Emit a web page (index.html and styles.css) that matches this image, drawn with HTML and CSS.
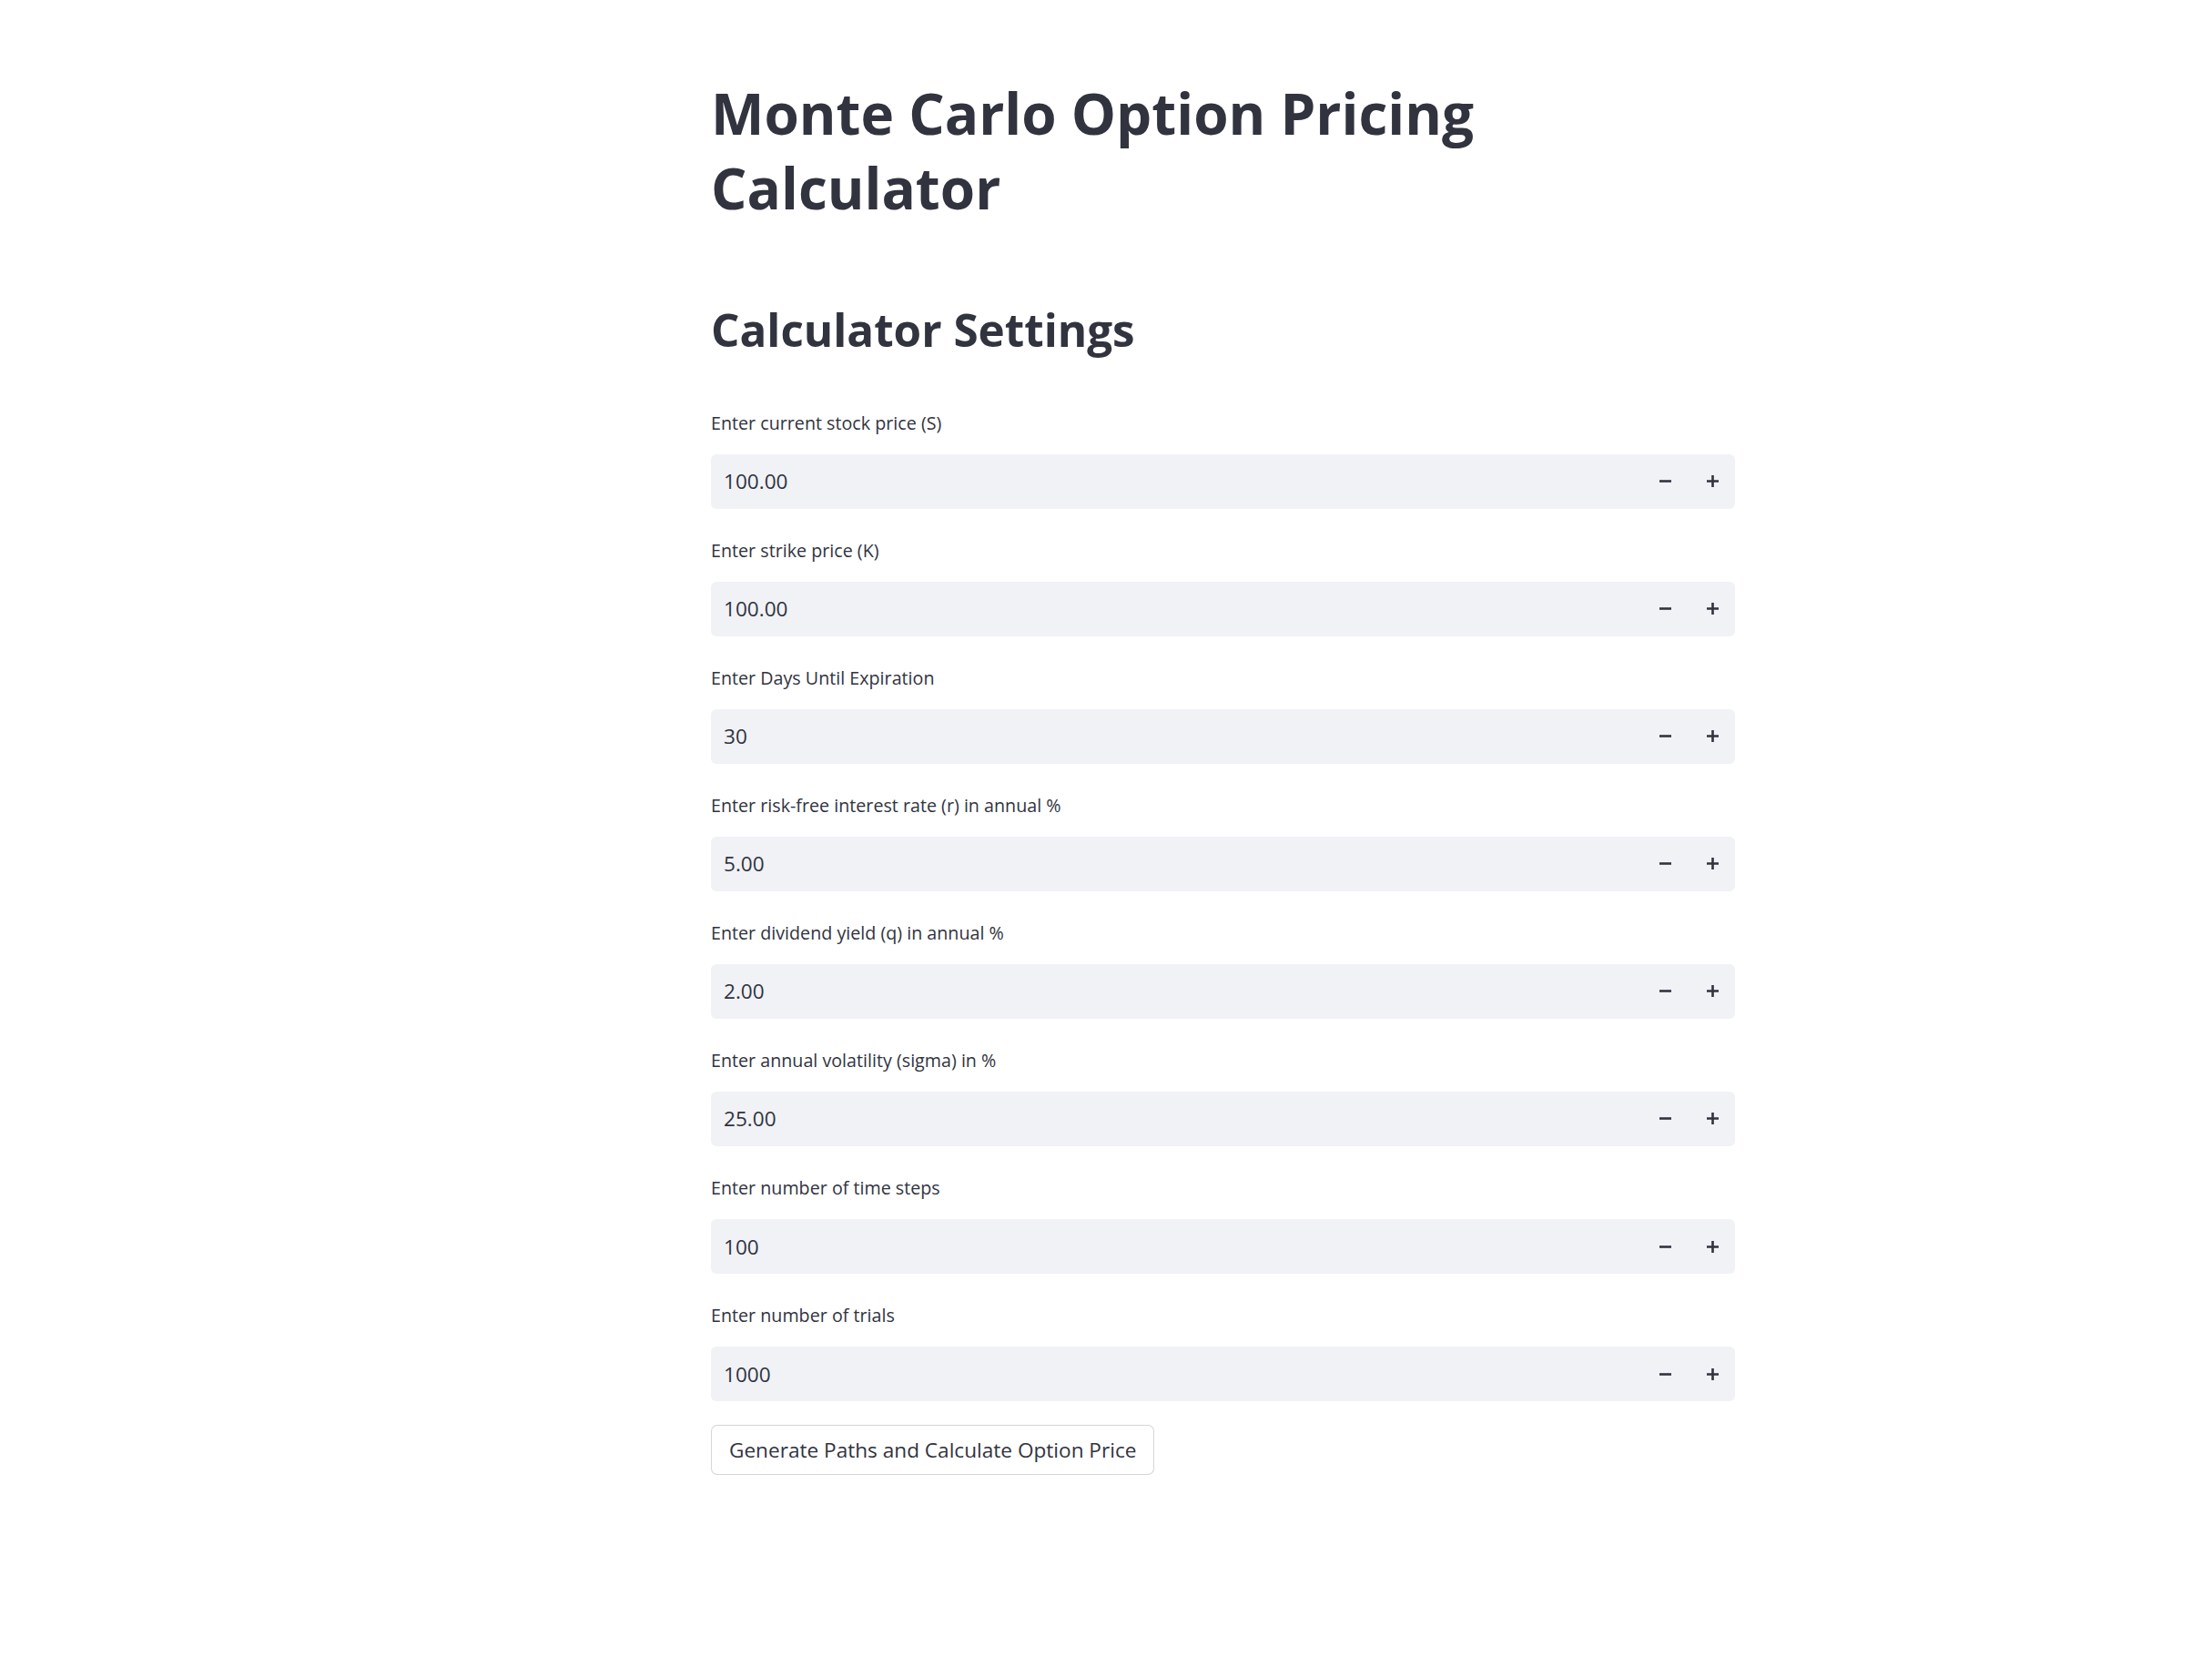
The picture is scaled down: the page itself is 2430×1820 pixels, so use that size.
FILE: index.html
```html
<!DOCTYPE html>
<html lang="en">
<head>
<meta charset="utf-8">
<title>Monte Carlo Option Pricing Calculator</title>
<link rel="stylesheet" href="styles.css">
</head>
<body>
<main class="app">
  <div class="block">
    <h1 class="title">Monte Carlo Option Pricing Calculator</h1>
    <h2 class="subtitle">Calculator Settings</h2>
    <div class="fields">
      <div class="field">
        <label class="field-label">Enter current stock price (S)</label>
        <div class="num-input">
          <input class="num-value" type="text" value="100.00">
          <button class="step dec"><svg viewBox="0 0 13 13" width="13" height="13"><path d="M0 6.5H13" stroke="currentColor" stroke-width="2.6"/></svg></button>
          <button class="step inc"><svg viewBox="0 0 13 13" width="13" height="13"><path d="M0 6.5H13M6.5 0V13" stroke="currentColor" stroke-width="2.6"/></svg></button>
        </div>
      </div>
      <div class="field">
        <label class="field-label">Enter strike price (K)</label>
        <div class="num-input">
          <input class="num-value" type="text" value="100.00">
          <button class="step dec"><svg viewBox="0 0 13 13" width="13" height="13"><path d="M0 6.5H13" stroke="currentColor" stroke-width="2.6"/></svg></button>
          <button class="step inc"><svg viewBox="0 0 13 13" width="13" height="13"><path d="M0 6.5H13M6.5 0V13" stroke="currentColor" stroke-width="2.6"/></svg></button>
        </div>
      </div>
      <div class="field">
        <label class="field-label">Enter Days Until Expiration</label>
        <div class="num-input">
          <input class="num-value" type="text" value="30">
          <button class="step dec"><svg viewBox="0 0 13 13" width="13" height="13"><path d="M0 6.5H13" stroke="currentColor" stroke-width="2.6"/></svg></button>
          <button class="step inc"><svg viewBox="0 0 13 13" width="13" height="13"><path d="M0 6.5H13M6.5 0V13" stroke="currentColor" stroke-width="2.6"/></svg></button>
        </div>
      </div>
      <div class="field">
        <label class="field-label">Enter risk-free interest rate (r) in annual %</label>
        <div class="num-input">
          <input class="num-value" type="text" value="5.00">
          <button class="step dec"><svg viewBox="0 0 13 13" width="13" height="13"><path d="M0 6.5H13" stroke="currentColor" stroke-width="2.6"/></svg></button>
          <button class="step inc"><svg viewBox="0 0 13 13" width="13" height="13"><path d="M0 6.5H13M6.5 0V13" stroke="currentColor" stroke-width="2.6"/></svg></button>
        </div>
      </div>
      <div class="field">
        <label class="field-label">Enter dividend yield (q) in annual %</label>
        <div class="num-input">
          <input class="num-value" type="text" value="2.00">
          <button class="step dec"><svg viewBox="0 0 13 13" width="13" height="13"><path d="M0 6.5H13" stroke="currentColor" stroke-width="2.6"/></svg></button>
          <button class="step inc"><svg viewBox="0 0 13 13" width="13" height="13"><path d="M0 6.5H13M6.5 0V13" stroke="currentColor" stroke-width="2.6"/></svg></button>
        </div>
      </div>
      <div class="field">
        <label class="field-label">Enter annual volatility (sigma) in %</label>
        <div class="num-input">
          <input class="num-value" type="text" value="25.00">
          <button class="step dec"><svg viewBox="0 0 13 13" width="13" height="13"><path d="M0 6.5H13" stroke="currentColor" stroke-width="2.6"/></svg></button>
          <button class="step inc"><svg viewBox="0 0 13 13" width="13" height="13"><path d="M0 6.5H13M6.5 0V13" stroke="currentColor" stroke-width="2.6"/></svg></button>
        </div>
      </div>
      <div class="field">
        <label class="field-label">Enter number of time steps</label>
        <div class="num-input">
          <input class="num-value" type="text" value="100">
          <button class="step dec"><svg viewBox="0 0 13 13" width="13" height="13"><path d="M0 6.5H13" stroke="currentColor" stroke-width="2.6"/></svg></button>
          <button class="step inc"><svg viewBox="0 0 13 13" width="13" height="13"><path d="M0 6.5H13M6.5 0V13" stroke="currentColor" stroke-width="2.6"/></svg></button>
        </div>
      </div>
      <div class="field">
        <label class="field-label">Enter number of trials</label>
        <div class="num-input">
          <input class="num-value" type="text" value="1000">
          <button class="step dec"><svg viewBox="0 0 13 13" width="13" height="13"><path d="M0 6.5H13" stroke="currentColor" stroke-width="2.6"/></svg></button>
          <button class="step inc"><svg viewBox="0 0 13 13" width="13" height="13"><path d="M0 6.5H13M6.5 0V13" stroke="currentColor" stroke-width="2.6"/></svg></button>
        </div>
      </div>
    </div>
    <button class="action">Generate Paths and Calculate Option Price</button>
  </div>
</main>
</body>
</html>
```

FILE: styles.css
```css
html, body {
  margin: 0;
  padding: 0;
  background: #ffffff;
}

body {
  color: #31333F;
  font-family: "Open Sans", "Noto Sans", sans-serif;
}

.app {
  padding: 83px 0 150px 781px;
}

.block {
  width: 1125px;
  display: flex;
  flex-direction: column;
}

.title {
  margin: 0;
  max-width: 1000px;
  font-size: 62px;
  line-height: 82px;
  font-weight: 700;
}

.subtitle {
  margin: 83.9px 0 0;
  font-size: 49.4px;
  line-height: 61.7px;
  font-weight: 700;
}

.fields {
  margin-top: 57.3px;
  display: flex;
  flex-direction: column;
  gap: 31.4px;
}

.field {
  display: flex;
  flex-direction: column;
}

.field-label {
  display: block;
  font-size: 19.7px;
  line-height: 30px;
  margin-bottom: 18.7px;
}

.num-input {
  display: flex;
  align-items: center;
  height: 60px;
  background: #F0F2F6;
  border-radius: 6px;
}

.num-value {
  flex: 1;
  min-width: 0;
  height: 60px;
  border: 0;
  outline: none;
  background: transparent;
  padding: 0 0 0 14px;
  font-family: inherit;
  font-size: 22.6px;
  color: #31333F;
}

.step {
  width: 50px;
  height: 60px;
  padding: 0;
  border: 0;
  background: transparent;
  color: #31333F;
  display: flex;
  align-items: center;
  justify-content: center;
}

.step.dec {
  width: 53px;
}

.step svg {
  display: block;
}

.action {
  margin-top: 26.2px;
  align-self: flex-start;
  height: 55px;
  padding: 0 19px;
  background: #ffffff;
  border: 1px solid rgba(49, 51, 63, 0.2);
  border-radius: 7px;
  font-family: inherit;
  font-size: 22.6px;
  line-height: 53px;
  color: #31333F;
}
```
